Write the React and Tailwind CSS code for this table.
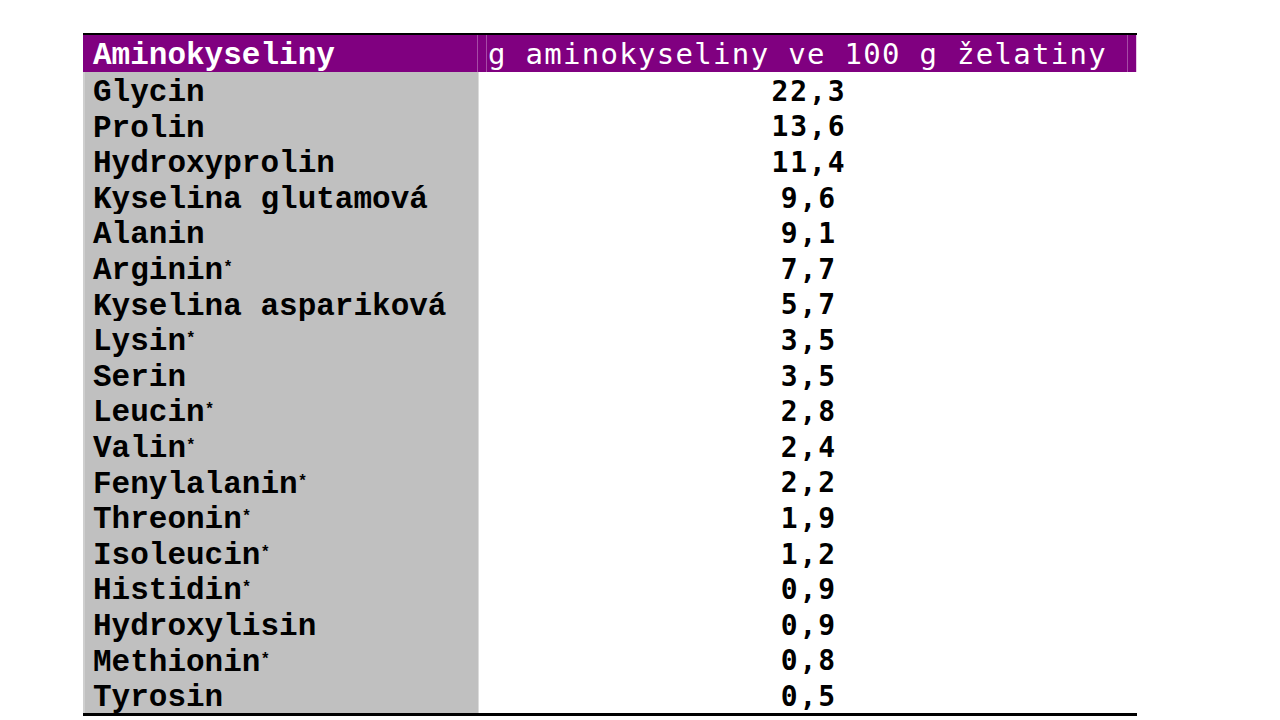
const rows = [
  ["Glycin", false, "22,3"],
  ["Prolin", false, "13,6"],
  ["Hydroxyprolin", false, "11,4"],
  ["Kyselina glutamová", false, "9,6"],
  ["Alanin", false, "9,1"],
  ["Arginin", true, "7,7"],
  ["Kyselina aspariková", false, "5,7"],
  ["Lysin", true, "3,5"],
  ["Serin", false, "3,5"],
  ["Leucin", true, "2,8"],
  ["Valin", true, "2,4"],
  ["Fenylalanin", true, "2,2"],
  ["Threonin", true, "1,9"],
  ["Isoleucin", true, "1,2"],
  ["Histidin", true, "0,9"],
  ["Hydroxylisin", false, "0,9"],
  ["Methionin", true, "0,8"],
  ["Tyrosin", false, "0,5"],
];

const courier = "font-['Liberation_Mono',monospace] font-bold text-[31px] leading-none";
const mono = "font-['DejaVu_Sans_Mono',monospace]";

export default function App() {
  return (
    <div className="w-[1280px] h-[720px] bg-white pt-[33px] pl-[83px]">
      <div className="w-[1054px] border-t-[2px] border-b-[3px] border-black">
        <div className="flex h-[37px] bg-[#800080] text-white">
          <div className={`w-[394px] flex items-center pl-[10px] pt-[3px] ${courier}`}>
            Aminokyseliny
          </div>
          <div className="w-px bg-[#a64aa6]" />
          <div className="w-[8px]" />
          <div className="w-px bg-[#a64aa6]" />
          <div
            className={`flex-1 flex items-center pl-[1px] pt-[2px] text-[29px] tracking-[1.3px] leading-none ${mono}`}
          >
            g aminokyseliny ve 100 g želatiny
          </div>
          <div className="w-px bg-[#a64aa6]" />
          <div className="w-[8px]" />
          <div className="w-px bg-[#e8c8e8]" />
        </div>
        {rows.map(([name, star, value], i) => (
          <div key={i} className="flex h-[35.6px]">
            <div className="w-[395px] bg-[#c0c0c0] border-l-2 border-[#cfcfcf] pl-[8px] pr-[8px] flex flex-col">
              <div className={`flex-1 flex items-center pt-[5px] text-black ${courier}`}>
                <span>{name}</span>
                {star && (
                  <span className="text-[16px] self-start mt-[5px] font-bold">*</span>
                )}
              </div>
              {i < rows.length - 1 && <div className="h-px bg-[#d2d2d2]" />}
            </div>
            <div className="w-px bg-[#dcdcdc]" />
            <div
              className={`flex-1 flex items-center justify-center pl-[2px] pt-[4px] text-[28px] font-bold tracking-[1.9px] leading-none text-black ${mono}`}
            >
              {value}
            </div>
          </div>
        ))}
      </div>
    </div>
  );
}
